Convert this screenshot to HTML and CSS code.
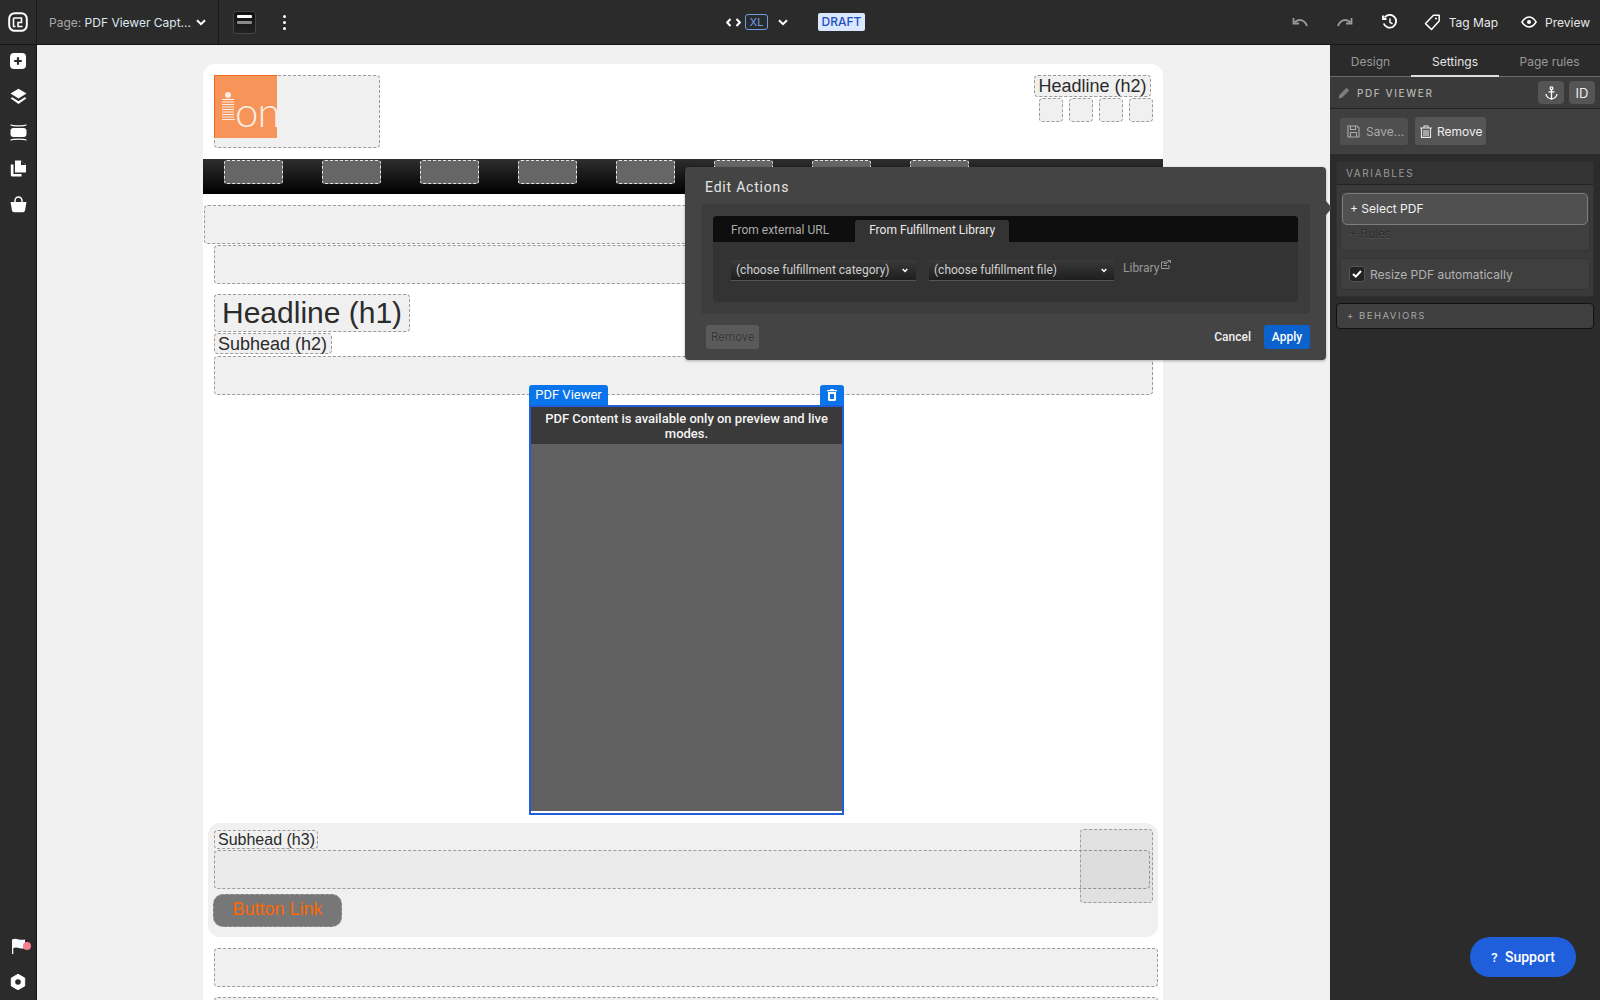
FILE: index.html
```html
<!DOCTYPE html>
<html lang="en">
<head>
    <meta charset="UTF-8">
    <title>PDF Viewer Capture</title>
    <link rel="stylesheet" href="styles.css">
</head>
<body>
    <div class="app">
        <!-- Top bar -->
        <header class="topbar">
            <div class="brand-cell">
                <svg width="20" height="20" viewBox="0 0 20 20" fill="none" stroke="#fff"><rect x="1.2" y="1.2" width="17.6" height="17.6" rx="5.5" stroke-width="2"/><path d="M5.5 6H13.5V10.5H10V14.5H14.5M5.5 6V14.5H7.5" stroke-width="1.6"/></svg>
            </div>
            <div class="page-select">
                <span class="page-label">Page:</span>&nbsp;<span>PDF Viewer Capt...</span>
                <svg class="chev" width="10" height="7" viewBox="0 0 10 7" fill="none" stroke="#fff" stroke-width="2"><path d="M1 1.2L5 5.2L9 1.2"/></svg>
            </div>
            <div class="layout-btn"><span class="bar-top"></span><span class="bar-mid"></span></div>
            <div class="dots"><i></i><i></i><i></i></div>
            <div class="breakpoint">
                <svg width="15" height="9" viewBox="0 0 15 9" fill="none" stroke="#fff" stroke-width="2"><path d="M4.5 1L1.2 4.5L4.5 8M10.5 1L13.8 4.5L10.5 8"/></svg>
                <span class="xl">XL</span>
                <svg width="10" height="7" viewBox="0 0 10 7" fill="none" stroke="#fff" stroke-width="2"><path d="M1 1.2L5 5.2L9 1.2"/></svg>
            </div>
            <span class="draft">DRAFT</span>
            <div class="top-actions">
                <svg class="muted-ico" width="16" height="10" viewBox="0 0 16 10" fill="none" stroke="#9a9a9a" stroke-width="1.8"><path d="M15 9C13.5 5 10.5 3 7.5 3C5.5 3 4 4 2.5 5.3"/><path d="M1.5 1V6.5H7" /></svg>
                <svg class="muted-ico" width="16" height="10" viewBox="0 0 16 10" fill="none" stroke="#9a9a9a" stroke-width="1.8"><path d="M1 9C2.5 5 5.5 3 8.5 3C10.5 3 12 4 13.5 5.3"/><path d="M14.5 1V6.5H9"/></svg>
                <svg width="16" height="16" viewBox="0 0 16 16" fill="none" stroke="#fff" stroke-width="1.8"><path d="M2.5 3.5A6.4 6.4 0 1 1 1.7 9.5"/><path d="M1 1.5V5H4.5"/><path d="M8 4.5V8.3L10.5 9.8" stroke-width="1.5"/></svg>
                <span class="top-link tag-link">
                    <svg width="17" height="17" viewBox="0 0 17 17" fill="none" stroke="#fff" stroke-width="1.5"><path d="M9.5 1.2H15.2V7L7.5 15.5L1.5 9.6Z" stroke-linejoin="round"/><circle cx="12" cy="4.5" r="1" fill="#fff" stroke="none"/></svg>
                    Tag Map
                </span>
                <span class="top-link">
                    <svg width="16" height="12" viewBox="0 0 16 12" fill="none" stroke="#fff" stroke-width="1.5"><path d="M.9 6C3 2.6 5.3 1 8 1S13 2.6 15.1 6C13 9.4 10.700 11 8 11S3 9.4 .9 6Z"/><circle cx="8" cy="6" r="2" fill="#fff" stroke="none"/></svg>
                    Preview
                </span>
            </div>
        </header>

        <!-- Left rail -->
        <nav class="rail">
            <svg width="16" height="16" viewBox="0 0 16 16"><rect width="16" height="16" rx="4" fill="#fff"/><path d="M8 4.200V11.800M4.200 8H11.800" stroke="#2b2b2b" stroke-width="2.200"/></svg>
            <svg width="17" height="17" viewBox="0 0 17 17" fill="#fff"><path d="M8.500 .8L16.500 5.600L8.500 10.400L.5 5.600Z"/><path d="M2.200 9.200L.5 10.300L8.500 15.900L16.500 10.300L14.800 9.200L8.500 13.300Z"/></svg>
            <svg width="17" height="17" viewBox="0 0 17 17" fill="#fff"><rect x="0.500" y="4" width="16" height="9" rx="3"/><path d="M.5 .7C3 2.300 14 2.300 16.500 .7M.5 16.300C3 14.700 14 14.700 16.500 16.300" fill="none" stroke="#fff" stroke-width="1.200"/></svg>
            <svg width="17" height="17" viewBox="0 0 17 17" fill="#fff"><path d="M5 .5H11L16 5V12.500H5Z"/><path d="M.8 4.500H3.500V14H11.500V16.500H2.500Q.8 16.500 .8 15Z"/><path d="M11 .5V5H16Z" fill="#2b2b2b"/></svg>
            <svg width="17" height="17" viewBox="0 0 17 17" fill="#fff"><path d="M.5 6H16.500L15 14.500Q14.700 16.300 13 16.300H4Q2.300 16.300 2 14.500Z"/><path d="M5 6.500V4.500A3.500 3.500 0 0 1 12 4.500V6.500" fill="none" stroke="#fff" stroke-width="1.500"/></svg>
            <div class="rail-bottom">
                <span class="flag">
                    <svg width="15" height="16" viewBox="0 0 15 16" fill="#f6f9ff"><path d="M1 1.500Q4 .2 7 1.200T14 1.500V10Q11 11 8 10T2.300 10V16H1Z"/></svg>
                    <i class="flag-dot"></i>
                </span>
                <svg width="16" height="16" viewBox="0 0 16 16"><path d="M8 .3L14.700 4.100V11.900L8 15.700L1.300 11.900V4.100Z" fill="#fff" stroke="#fff" stroke-linejoin="round"/><circle cx="8" cy="8" r="2.800" fill="#2b2b2b"/></svg>
            </div>
        </nav>

        <!-- Canvas with the page being edited -->
        <main class="canvas">
            <div class="page">
                <div class="page-head">
                    <div class="zone logo-zone">
                        <div class="logo">
                            <svg class="logo-i" width="14" height="28" viewBox="0 0 14 28" fill="#fbeee5"><circle cx="7" cy="3" r="3"/><path d="M1 7H13V8H1ZM1 9.500H13V10.500H1ZM1 12H13V13H1ZM1 14.500H13V15.500H1ZM1 17H13V18H1ZM1 19.500H13V20.500H1ZM1 22H13V23H1ZM1 24.500H13V25.500H1ZM1 27H14V28H1Z"/></svg>
                            <span class="logo-on">on</span>
                        </div>
                    </div>
                    <div class="head-right">
                        <div class="zone h2-top">Headline (h2)</div>
                        <div class="social">
                            <div class="zone"></div>
                            <div class="zone"></div>
                            <div class="zone"></div>
                            <div class="zone"></div>
                        </div>
                    </div>
                </div>
                <div class="nav-strip">
                    <div class="nav-item"></div>
                    <div class="nav-item"></div>
                    <div class="nav-item"></div>
                    <div class="nav-item"></div>
                    <div class="nav-item"></div>
                    <div class="nav-item"></div>
                    <div class="nav-item"></div>
                    <div class="nav-item"></div>
                </div>
                <div class="zone block block-wide"></div>
                <div class="zone block block-inset"></div>
                <h1 class="zone h1-box">Headline (h1)</h1>
                <h2 class="zone h2-box">Subhead (h2)</h2>
                <div class="zone block block-inset block-third"></div>

                <div class="pdf-viewer">
                    <span class="pdf-tag">PDF Viewer</span>
                    <span class="pdf-trash">
                        <svg width="10" height="12" viewBox="0 0 10 12" fill="#fff"><path d="M3.500 0H6.500L7 1H10V2.300H0V1H3Z"/><path fill-rule="evenodd" d="M1 3H9V10.500Q9 12 7.500 12H2.500Q1 12 1 10.500ZM3 5V10H7V5Z"/></svg>
                    </span>
                    <div class="pdf-note">PDF Content is available only on preview and live modes.</div>
                    <div class="pdf-body"></div>
                </div>

                <section class="cta">
                    <h3 class="zone h3-box">Subhead (h3)</h3>
                    <div class="zone cta-text"></div>
                    <div class="zone cta-side"></div>
                    <a class="zone cta-button">Button Link</a>
                </section>

                <div class="zone block block-foot"></div>
                <div class="zone block block-foot"></div>
            </div>
        </main>

        <!-- Right settings panel -->
        <aside class="panel">
            <div class="panel-tabs">
                <span class="panel-tab tab-design">Design</span>
                <span class="panel-tab tab-on">Settings</span>
                <span class="panel-tab tab-rules">Page rules</span>
            </div>
            <div class="panel-title">
                <svg width="12" height="12" viewBox="0 0 12 12" fill="#7c7c7c"><path d="M8.500 .8L11.200 3.500L4 10.700L.6 11.400L1.300 8Z"/></svg>
                <span class="title-text">PDF VIEWER</span>
                <span class="square-btn anchor-btn">
                    <svg width="13" height="14" viewBox="0 0 13 14" fill="none" stroke="#fff" stroke-width="1.300"><circle cx="6.500" cy="2.200" r="1.400"/><path d="M6.500 3.600V13M3.500 5.800H9.500M1 8C1.500 11 3.500 12.500 6.500 13C9.500 12.500 11.500 11 12 8"/></svg>
                </span>
                <span class="square-btn id-btn">ID</span>
            </div>
            <div class="panel-actions">
                <span class="act-btn act-save">
                    <svg width="13" height="13" viewBox="0 0 13 13" fill="none" stroke="#aaa" stroke-width="1.100"><path d="M1 1H10L12 3V12H1Z"/><path d="M3.500 1V4.500H8.500V1M3.500 12V7.500H9.500V12"/></svg>
                    Save...
                </span>
                <span class="act-btn act-remove">
                    <svg width="12" height="13" viewBox="0 0 12 13" fill="none" stroke="#e6e6e6" stroke-width="1.100"><path d="M0 3H12M4 3V1H8V3M1.500 3V12.400H10.500V3M4 5V11M6 5V11M8 5V11"/></svg>
                    Remove
                </span>
            </div>
            <div class="var-box">
                <div class="var-head">VARIABLES</div>
                <div class="var-inner">
                    <div class="select-pdf">+ Select PDF</div>
                    <div class="rules-link">+ Rules</div>
                </div>
                <div class="var-check">
                    <span class="checkbox">
                        <svg width="10" height="8" viewBox="0 0 10 8" fill="none" stroke="#fff" stroke-width="2"><path d="M1 4L3.800 6.600L9 1"/></svg>
                    </span>
                    Resize PDF automatically
                </div>
            </div>
            <div class="behaviors">+ BEHAVIORS</div>
        </aside>

        <!-- Edit Actions popup over the canvas -->
        <div class="popup">
            <span class="popup-arrow"></span>
            <div class="popup-title">Edit Actions</div>
            <div class="popup-inner">
                <div class="source-box">
                    <div class="source-tabs">
                        <span class="source-tab">From external URL</span>
                        <span class="source-tab source-on">From Fulfillment Library</span>
                    </div>
                    <div class="source-row">
                        <div class="fake-select sel-cat">(choose fulfillment category)
                            <svg width="6" height="5" viewBox="0 0 6 5" fill="none" stroke="#fff" stroke-width="1.500"><path d="M.7 1L3 3.500L5.300 1"/></svg>
                        </div>
                        <div class="fake-select">(choose fulfillment file)
                            <svg width="6" height="5" viewBox="0 0 6 5" fill="none" stroke="#fff" stroke-width="1.500"><path d="M.7 1L3 3.500L5.300 1"/></svg>
                        </div>
                        <span class="library">Library
                            <svg width="10" height="9" viewBox="0 0 10 9" fill="none" stroke="#9a9a9a"><path d="M6 2H.5V8.500H8V5M3 3.500H5M2.500 5.500H6M5.500 3.500L9 .5M6.500 .5H9.500V3"/></svg>
                        </span>
                    </div>
                </div>
            </div>
            <div class="popup-foot">
                <span class="btn-remove">Remove</span>
                <span class="btn-cancel">Cancel</span>
                <span class="btn-apply">Apply</span>
            </div>
        </div>

        <a class="support"><span class="q">?</span> Support</a>
    </div>
</body>
</html>
```

FILE: styles.css
```css
* {
    margin: 0;
    padding: 0;
    box-sizing: border-box;
}

html, body {
    height: 100%;
    overflow: hidden;
}

body {
    font-family: 'Inter', 'Noto Sans', sans-serif;
    color: #fff;
    background: #f1f1f1;
}

.app {
    position: relative;
    display: grid;
    grid-template-columns: 37px 1293px 270px;
    grid-template-rows: 45px 955px;
    height: 1000px;
    width: 1600px;
    overflow: hidden;
}

/* Top bar */
.topbar {
    grid-column: 1 / 4;
    display: flex;
    align-items: center;
    background: #2b2b2b;
    border-bottom: 1px solid #161616;
    font-size: 12px;
}

.brand-cell {
    width: 37px;
    height: 44px;
    display: flex;
    align-items: center;
    justify-content: center;
    border-right: 1px solid #191919;
}

.page-select {
    width: 182px;
    height: 44px;
    padding-left: 12px;
    display: flex;
    align-items: center;
    border-right: 1px solid #191919;
    color: #dfe6ee;
    white-space: nowrap;
}

.page-label {
    color: #a8a8a8;
}

.chev {
    margin-left: 5px;
}

.layout-btn {
    width: 23px;
    height: 23px;
    margin-left: 14px;
    padding: 3px;
    background: linear-gradient(#111, #222);
    border: 1px solid #444;
    border-radius: 3px;
    display: flex;
    flex-direction: column;
    gap: 3px;
}

.bar-top {
    height: 3px;
    background: #fff;
    border-radius: 1px;
}

.bar-mid {
    height: 3px;
    background: #8a8a8a;
    border-radius: 1px;
}

.dots {
    width: 4px;
    margin-left: 27px;
    display: flex;
    flex-direction: column;
    gap: 3px;
}

.dots i {
    width: 3px;
    height: 3px;
    border-radius: 50%;
    background: #fff;
}

.breakpoint {
    margin-left: 439px;
    display: flex;
    align-items: center;
}

.xl {
    margin-left: 4px;
    margin-right: 10px;
    width: 23px;
    height: 16px;
    border: 1px solid #6f9fe0;
    border-radius: 3px;
    color: #6ea2ee;
    font-size: 11px;
    line-height: 14px;
    text-align: center;
}

.draft {
    margin-left: 30px;
    width: 47px;
    height: 18px;
    background: #dbe7ff;
    border-radius: 2px;
    color: #1f4fc0;
    font-size: 12px;
    font-weight: 500;
    line-height: 18px;
    text-align: center;
}

.top-actions {
    margin-left: auto;
    display: flex;
    align-items: center;
    padding-right: 10px;
}

.muted-ico {
    margin-right: 29px;
}

.top-link {
    display: flex;
    align-items: center;
    gap: 8px;
    color: #e8e8e8;
    white-space: nowrap;
}

.tag-link {
    margin-left: 26px;
    margin-right: 23px;
}

/* Left rail */
.rail {
    background: #2b2b2b;
    border-right: 1px solid #161616;
    display: flex;
    flex-direction: column;
    align-items: center;
    padding-top: 8px;
    gap: 19px;
    height: 955px;
}

.rail-bottom {
    margin-top: auto;
    margin-bottom: 10px;
    display: flex;
    flex-direction: column;
    align-items: center;
    gap: 20px;
}

.flag {
    position: relative;
    display: block;
    height: 16px;
}

.flag-dot {
    position: absolute;
    left: 12px;
    top: 4px;
    width: 8px;
    height: 8px;
    border-radius: 50%;
    background: #f7808e;
}

/* Canvas */
.canvas {
    background: #f1f1f1;
    padding: 19px 0 0 166px;
    overflow: hidden;
}

.page {
    width: 960px;
    background: #fff;
    border-radius: 12px 12px 0 0;
    font-family: 'Liberation Sans', Arial, sans-serif;
    color: #2b2b2b;
    height: 960px;
}

.zone {
    background: #f0f0f0;
    border: 1px dashed #9b9b9b;
    border-radius: 4px;
    font-weight: 400;
}

.page-head {
    display: flex;
    justify-content: space-between;
    height: 95px;
    padding: 11px 10px 0 11px;
}

.logo-zone {
    position: relative;
    width: 166px;
    height: 73px;
}

.logo {
    position: absolute;
    left: -1px;
    top: -1px;
    width: 63px;
    height: 63px;
    background: #f69459;
    border-top: 1px solid #f26a1e;
    border-left: 1px solid #f26a1e;
}

.logo-i {
    position: absolute;
    left: 6px;
    top: 16px;
}

.logo-on {
    position: absolute;
    left: 20px;
    top: 10px;
    font-family: 'Lato', sans-serif;
    font-weight: 300;
    font-size: 42px;
    line-height: 50px;
    color: #fbeee5;
    letter-spacing: -1px;
}

.head-right {
    display: flex;
    flex-direction: column;
    align-items: flex-end;
}

.h2-top {
    width: 117px;
    height: 22px;
    margin-right: 2px;
    font-size: 18px;
    line-height: 20px;
    text-align: center;
    white-space: nowrap;
}

.social {
    margin-top: 1px;
    display: flex;
    gap: 6px;
}

.social .zone {
    width: 24px;
    height: 24px;
}

.nav-strip {
    height: 35px;
    background: linear-gradient(#2e2e2e, #000);
    padding: 1px 0 0 21px;
    display: flex;
    gap: 39px;
}

.nav-item {
    width: 59px;
    height: 24px;
    background: #666;
    border: 1px dashed #e6e6e6;
    border-radius: 3px;
}

.block {
    height: 39px;
}

.block-wide {
    margin: 11px 0 1px 1px;
    width: 959px;
}

.block-inset {
    margin-left: 11px;
    width: 939px;
}

.h1-box {
    margin: 10px 0 1px 11px;
    width: 196px;
    height: 38px;
    padding-left: 7px;
    font-size: 30px;
    line-height: 36px;
}

.h2-box {
    margin-left: 11px;
    width: 118px;
    height: 21px;
    padding-left: 3px;
    font-size: 18px;
    line-height: 20px;
}

.block-third {
    margin-top: 2px;
}

/* PDF viewer element */
.pdf-viewer {
    position: relative;
    margin: 10px 0 0 326px;
    width: 315px;
    height: 410px;
    border: 2px solid #1f5fdc;
    background: #fff;
    padding-bottom: 2px;
}

.pdf-tag {
    position: absolute;
    left: -2px;
    top: -22px;
    width: 79px;
    height: 20px;
    background: #0a74ea;
    border-radius: 3px 3px 0 0;
    color: #fff;
    font-family: 'Roboto', sans-serif;
    font-size: 13px;
    line-height: 20px;
    text-align: center;
}

.pdf-trash {
    position: absolute;
    right: -2px;
    top: -22px;
    width: 24px;
    height: 20px;
    background: #0a74ea;
    border-radius: 3px 3px 0 0;
    display: flex;
    align-items: center;
    justify-content: center;
}

.pdf-note {
    height: 37px;
    background: #3a3a3a;
    color: #f4f4f4;
    font-family: 'Roboto', sans-serif;
    font-weight: 500;
    font-size: 13px;
    line-height: 15px;
    padding: 4px 8px 0;
    text-align: center;
}

.pdf-body {
    height: 367px;
    background: #616161;
}

/* Call to action section */
.cta {
    position: relative;
    margin: 8px 0 0 5px;
    width: 950px;
    height: 114px;
    background: #f0f0f0;
    border-radius: 12px;
    padding: 7px 0 0 6px;
}

.h3-box {
    width: 104px;
    height: 19px;
    padding-left: 3px;
    font-size: 16px;
    line-height: 17px;
}

.cta-text {
    margin-top: 1px;
    width: 936px;
    height: 39px;
    background: #ebebeb;
}

.cta-side {
    position: absolute;
    left: 872px;
    top: 6px;
    width: 73px;
    height: 74px;
    background: rgba(0, 0, 0, 0.06);
}

.cta-button {
    display: block;
    margin: 5px 0 0 -1px;
    width: 129px;
    height: 33px;
    background: #777;
    border-radius: 10px;
    color: #f60;
    font-size: 18px;
    line-height: 29px;
    text-align: center;
}

.block-foot {
    margin: 11px 0 -1px 11px;
    width: 944px;
}

/* Right panel */
.panel {
    background: #2b2b2b;
    height: 955px;
    font-size: 12px;
}

.panel-tabs {
    display: flex;
    height: 32px;
    border-bottom: 1px solid #6a6a6a;
    position: relative;
}

.panel-tab {
    text-align: center;
    color: #999;
    line-height: 34px;
}

.tab-design {
    width: 81px;
}

.tab-on {
    width: 88px;
    color: #e6e6e6;
    border-bottom: 2px solid #ddd;
    height: 32px;
}

.tab-rules {
    width: 101px;
}

.panel-title {
    height: 32px;
    padding: 0 5px 0 8px;
    background: #3a3a3a;
    border-bottom: 1px solid #242424;
    display: flex;
    align-items: center;
}

.title-text {
    margin-left: 7px;
    color: #b4b4b4;
    font-size: 10px;
    letter-spacing: 1.6px;
    font-weight: 500;
}

.square-btn {
    width: 26px;
    height: 23px;
    background: #555;
    border-radius: 4px;
    display: flex;
    align-items: center;
    justify-content: center;
}

.anchor-btn {
    margin-left: auto;
}

.id-btn {
    margin-left: 5px;
    color: #eee;
    font-size: 13px;
}

.panel-actions {
    height: 45px;
    background: #3f3f3f;
    padding: 8px 10px 0;
    display: flex;
    gap: 7px;
    align-items: flex-start;
}

.act-btn {
    height: 27px;
    margin-top: 1px;
    background: #4f4f4f;
    border-radius: 3px;
    display: flex;
    align-items: center;
    gap: 6px;
    padding-left: 7px;
    white-space: nowrap;
}

.act-save {
    width: 68px;
    color: #aaa;
}

.act-remove {
    width: 71px;
    height: 28px;
    margin-top: 0;
    background: #565656;
    color: #eee;
    padding-left: 5px;
    gap: 5px;
}

.var-box {
    margin: 7px 6px 0;
    height: 136px;
    background: #3a3a3a;
    border-radius: 3px;
    border: 1px solid #303030;
}

.var-head {
    height: 23px;
    background: #333;
    border-bottom: 1px solid #232323;
    padding-left: 9px;
    color: #9a9a9a;
    font-size: 10px;
    letter-spacing: 1.6px;
    line-height: 23px;
}

.var-inner {
    margin: 6px 3px 0;
    height: 60px;
    background: #3f3f3f;
    border: 1px solid #353535;
    border-radius: 3px;
}

.select-pdf {
    height: 32px;
    margin: 1px 1px 0 1px;
    background: #505050;
    border: 1px solid #7d7d7d;
    border-radius: 5px;
    padding-left: 7px;
    line-height: 29px;
    color: #f2f2f2;
}

.rules-link {
    padding-left: 8px;
    line-height: 17px;
    color: #2e2e2e;
    text-shadow: 0 1px 0 #555;
}

.var-check {
    margin: 7px 3px 0;
    height: 32px;
    background: #3f3f3f;
    border: 1px solid #353535;
    border-radius: 3px;
    display: flex;
    align-items: center;
    gap: 5px;
    padding-left: 8px;
    color: #b2b2b2;
}

.checkbox {
    width: 16px;
    height: 16px;
    background: #222;
    border: 1px solid #555;
    border-radius: 3px;
    display: flex;
    align-items: center;
    justify-content: center;
}

.behaviors {
    margin: 6px 6px 0;
    height: 26px;
    background: #3f3f3f;
    border: 1px solid #111;
    border-radius: 4px;
    padding-left: 10px;
    color: #a8a8a8;
    font-size: 9.500px;
    letter-spacing: 1.500px;
    line-height: 24px;
}

/* Edit Actions popup */
.popup {
    position: absolute;
    left: 685px;
    top: 167px;
    width: 641px;
    height: 193px;
    background: #444;
    border-radius: 4px;
    font-family: 'Roboto', sans-serif;
    box-shadow: 0 1px 3px rgba(0, 0, 0, 0.3);
}

.popup-arrow {
    position: absolute;
    right: -6px;
    top: 34px;
    width: 0;
    height: 0;
    border-top: 7px solid transparent;
    border-bottom: 7px solid transparent;
    border-left: 6px solid #444;
}

.popup-title {
    height: 37px;
    padding-left: 20px;
    font-size: 14px;
    letter-spacing: 0.8px;
    line-height: 40px;
    color: #e6e6e6;
}

.popup-inner {
    margin: 0 16px;
    height: 110px;
    background: #3c3c3c;
    border-radius: 4px;
    padding: 12px;
}

.source-box {
    height: 86px;
    background: #333;
    border-radius: 4px;
    overflow: hidden;
}

.source-tabs {
    height: 26px;
    background: #0e0e0e;
    display: flex;
    align-items: flex-end;
    padding-left: 18px;
}

.source-tab {
    height: 22px;
    padding: 0 13px 0 0;
    margin-right: 14px;
    color: #ababab;
    font-size: 12px;
    line-height: 20px;
}

.source-on {
    margin-right: 0;
    padding: 0 14px;
    margin-left: -1px;
    background: #333;
    border-radius: 3px 3px 0 0;
    color: #eaeaea;
}

.source-row {
    display: flex;
    align-items: flex-start;
    padding: 18px 0 0 18px;
}

.fake-select {
    position: relative;
    width: 185px;
    height: 21px;
    margin-right: 13px;
    padding-left: 5px;
    background: linear-gradient(#3a3a3a, #1e1e1e);
    border-bottom: 1px solid #555;
    color: #cfcfcf;
    font-size: 12px;
    line-height: 20px;
    white-space: nowrap;
    display: flex;
    align-items: center;
    justify-content: space-between;
    padding-right: 7px;
}

.sel-cat {
    padding-right: 8px;
}

.library {
    margin-left: -4px;
    color: #999;
    font-size: 12px;
    line-height: 17px;
    display: flex;
    align-items: flex-start;
    gap: 2px;
}

.popup-foot {
    display: flex;
    align-items: center;
    padding: 11px 16px 0 21px;
}

.btn-remove {
    width: 53px;
    height: 24px;
    background: #5a5a5a;
    border-radius: 3px;
    color: #333;
    text-shadow: 0 0 1px #777;
    font-size: 12px;
    line-height: 24px;
    text-align: center;
}

.btn-cancel {
    margin-left: auto;
    margin-right: 13px;
    color: #eee;
    font-size: 12px;
    font-weight: 500;
}

.btn-apply {
    width: 46px;
    height: 24px;
    background: #0b62cc;
    border-radius: 3px;
    color: #fff;
    font-size: 12px;
    font-weight: 500;
    line-height: 24px;
    text-align: center;
}

/* Support pill */
.support {
    position: absolute;
    left: 1470px;
    top: 937px;
    width: 106px;
    height: 40px;
    background: #1f5fdc;
    border-radius: 20px;
    color: #fff;
    font-family: 'Roboto', sans-serif;
    font-weight: 500;
    font-size: 14px;
    line-height: 40px;
    text-align: center;
}

.q {
    margin-right: 4px;
    font-size: 13px;
}
```
